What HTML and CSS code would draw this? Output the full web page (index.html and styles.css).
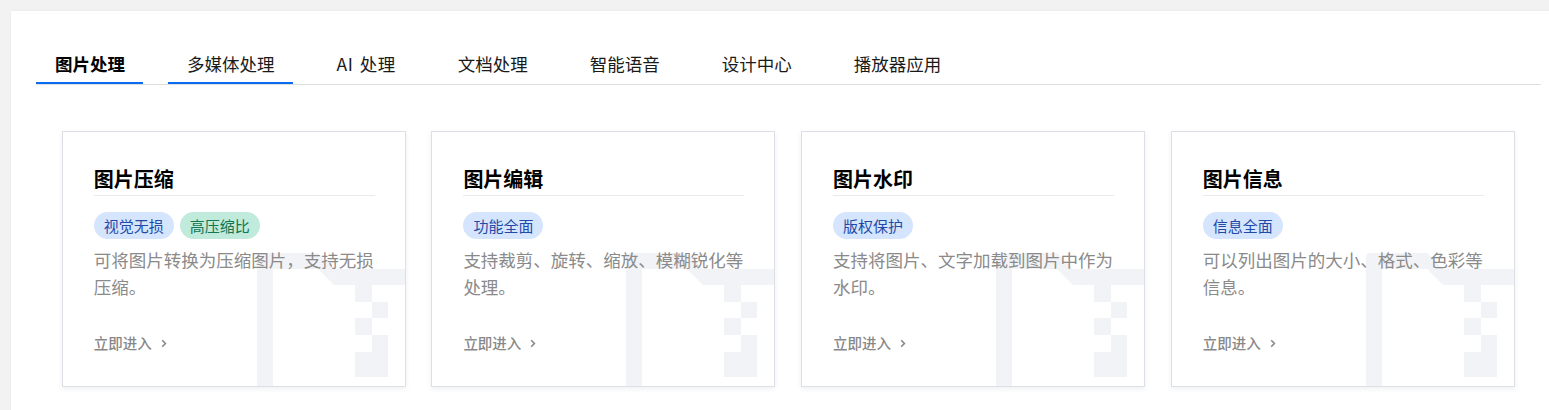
FILE: index.html
```html
<!DOCTYPE html>
<html lang="zh-CN">
<head>
<meta charset="utf-8">
<title>图片处理</title>
<link rel="stylesheet" href="styles.css">
</head>
<body>
<div class="panel">
  <div class="tabs">
    <div class="tab active">图片处理</div>
    <div class="tab hover">多媒体处理</div>
    <div class="tab tab-ai">AI 处理</div>
    <div class="tab">文档处理</div>
    <div class="tab">智能语音</div>
    <div class="tab">设计中心</div>
    <div class="tab">播放器应用</div>
  </div>
  <div class="cards">
    <div class="card">
      <svg class="deco" width="150" height="140" viewBox="0 0 150 140"><path d="M0 4a4 4 0 0 1 4-4h57l16 16h73v16H77L61 16H16v124H0z"/><rect x="98" y="32" width="17" height="17"/><rect x="115" y="49" width="16" height="16"/><rect x="98" y="65" width="17" height="17"/><rect x="115" y="82" width="16" height="17"/><rect x="98" y="99" width="33" height="25"/></svg>
      <div class="card-title">图片压缩</div>
      <div class="tags"><span class="tag blue">视觉无损</span><span class="tag green">高压缩比</span></div>
      <p class="desc">可将图片转换为压缩图片，支持无损压缩。</p>
      <a class="more">立即进入<svg class="chev" width="6" height="9" viewBox="0 0 6 9"><path d="M1.2 1.2 4.4 4.5 1.2 7.8"/></svg></a>
    </div>
    <div class="card">
      <svg class="deco" width="150" height="140" viewBox="0 0 150 140"><path d="M0 4a4 4 0 0 1 4-4h57l16 16h73v16H77L61 16H16v124H0z"/><rect x="98" y="32" width="17" height="17"/><rect x="115" y="49" width="16" height="16"/><rect x="98" y="65" width="17" height="17"/><rect x="115" y="82" width="16" height="17"/><rect x="98" y="99" width="33" height="25"/></svg>
      <div class="card-title">图片编辑</div>
      <div class="tags"><span class="tag blue">功能全面</span></div>
      <p class="desc">支持裁剪、旋转、缩放、模糊锐化等处理。</p>
      <a class="more">立即进入<svg class="chev" width="6" height="9" viewBox="0 0 6 9"><path d="M1.2 1.2 4.4 4.5 1.2 7.8"/></svg></a>
    </div>
    <div class="card">
      <svg class="deco" width="150" height="140" viewBox="0 0 150 140"><path d="M0 4a4 4 0 0 1 4-4h57l16 16h73v16H77L61 16H16v124H0z"/><rect x="98" y="32" width="17" height="17"/><rect x="115" y="49" width="16" height="16"/><rect x="98" y="65" width="17" height="17"/><rect x="115" y="82" width="16" height="17"/><rect x="98" y="99" width="33" height="25"/></svg>
      <div class="card-title">图片水印</div>
      <div class="tags"><span class="tag blue">版权保护</span></div>
      <p class="desc">支持将图片、文字加载到图片中作为水印。</p>
      <a class="more">立即进入<svg class="chev" width="6" height="9" viewBox="0 0 6 9"><path d="M1.2 1.2 4.4 4.5 1.2 7.8"/></svg></a>
    </div>
    <div class="card">
      <svg class="deco" width="150" height="140" viewBox="0 0 150 140"><path d="M0 4a4 4 0 0 1 4-4h57l16 16h73v16H77L61 16H16v124H0z"/><rect x="98" y="32" width="17" height="17"/><rect x="115" y="49" width="16" height="16"/><rect x="98" y="65" width="17" height="17"/><rect x="115" y="82" width="16" height="17"/><rect x="98" y="99" width="33" height="25"/></svg>
      <div class="card-title">图片信息</div>
      <div class="tags"><span class="tag blue">信息全面</span></div>
      <p class="desc">可以列出图片的大小、格式、色彩等信息。</p>
      <a class="more">立即进入<svg class="chev" width="6" height="9" viewBox="0 0 6 9"><path d="M1.2 1.2 4.4 4.5 1.2 7.8"/></svg></a>
    </div>
  </div>
</div>
</body>
</html>
```

FILE: styles.css
```css
html, body {
  margin: 0;
  padding: 0;
}
body {
  background: #f2f2f2;
  font-family: "Noto Sans CJK SC", "Noto Sans", sans-serif;
  overflow: hidden;
  height: 410px;
}
.panel {
  margin: 11px 0 0 11px;
  background: #fff;
  padding: 41px 8px 0 25px;
  height: 399px;
  box-sizing: border-box;
  box-shadow: 0 0 3px rgba(0, 0, 0, 0.05);
}
.tabs {
  display: flex;
  gap: 25px;
  border-bottom: 1px solid #dedede;
}
.tab {
  font-size: 17.5px;
  line-height: 24px;
  color: #1a1a1a;
  padding: 0 18px 6px 19px;
  border-bottom: 2px solid transparent;
  white-space: nowrap;
}
.tab-ai {
  letter-spacing: 0.5px;
  word-spacing: 2px;
}
.tab.active {
  font-weight: 700;
  color: #000;
  border-bottom-color: #0a6cf0;
}
.tab.hover {
  border-bottom-color: #0a6cf0;
}
.cards {
  display: flex;
  gap: 25.7px;
  margin-top: 46px;
  padding-left: 25.7px;
}
.card {
  position: relative;
  overflow: hidden;
  flex: 0 0 auto;
  width: 344px;
  height: 256px;
  box-sizing: border-box;
  border: 1px solid #dcdfe6;
  box-shadow: 0 2px 5px rgba(30, 40, 70, 0.07);
  background: #fff;
  padding: 33px 30px 33px 31px;
  display: flex;
  flex-direction: column;
}
.deco {
  position: absolute;
  left: 194px;
  top: 121px;
  fill: #f2f3f7;
}
.card-title,
.tags,
.desc,
.more {
  position: relative;
}
.card-title {
  font-size: 20px;
  font-weight: 700;
  line-height: 28px;
  color: #000;
  padding-bottom: 2px;
  border-bottom: 1px solid #ebebeb;
}
.tags {
  display: flex;
  gap: 6px;
  margin-top: 16px;
}
.tag {
  font-size: 15px;
  line-height: 27px;
  padding: 0 10px;
  border-radius: 14px;
}
.tag.blue {
  background: #d5e5fe;
  color: #1f4aa8;
}
.tag.green {
  background: #c0eadb;
  color: #117651;
}
.desc {
  margin: 7px 0 0;
  font-size: 17.5px;
  line-height: 27px;
  color: #8a8a8a;
}
.more {
  margin-top: auto;
  display: flex;
  align-items: center;
  font-size: 14.5px;
  line-height: 20px;
  font-weight: 500;
  color: #888;
}
.chev {
  margin-left: 9px;
  fill: none;
  stroke: #888;
  stroke-width: 1.6;
}
```
